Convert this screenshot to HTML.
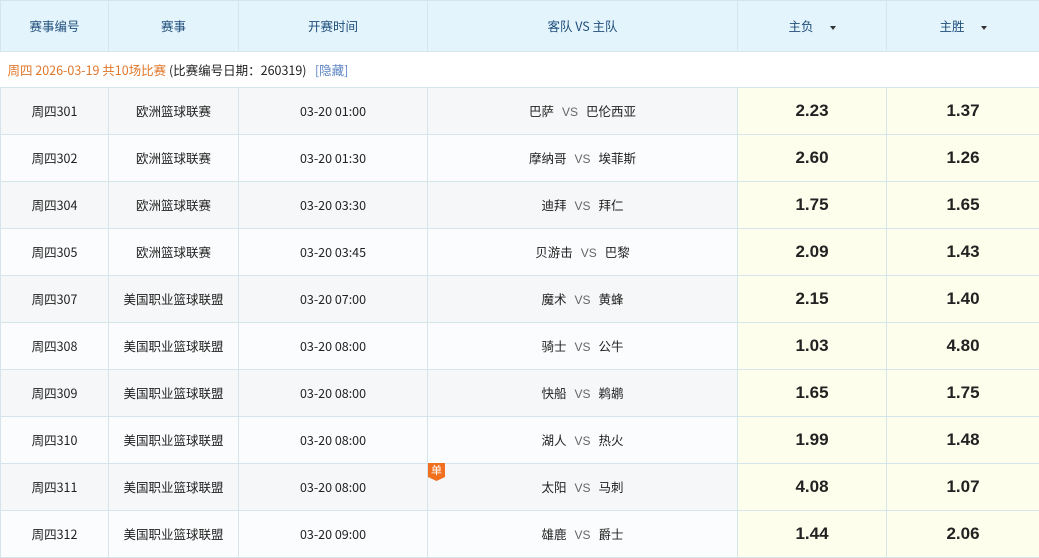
<!DOCTYPE html>
<html><head><meta charset="utf-8"><style>
*{margin:0;padding:0;box-sizing:border-box}
body{width:1039px;height:557px;overflow:hidden;background:#fff;font-family:"Noto Sans CJK SC","Liberation Sans",sans-serif;font-size:12.5px;color:#222}
table{border-collapse:collapse;table-layout:fixed;width:1039px}
td,th{border:1px solid #d5e5ec;text-align:center;font-weight:normal;vertical-align:middle;line-height:16px}
th{background:#e4f4fd;color:#1f4e79;height:51px;font-size:12.5px}
tr.r td{height:47px}
tr.r:nth-child(odd) td{background:#f6f7f8}
tr.r:nth-child(even) td{background:#fbfcfd}
tr.r td.o{background:#fefeed!important;font-weight:bold;font-size:17px;color:#222;font-family:"Liberation Sans",sans-serif}
.info td{height:36px;text-align:left;padding-left:7px;background:#fff;border-left:none;border-right:none}
.orange{color:#e0762a}
.blue{color:#5b83c4}
.vs{color:#666;font-size:12px;margin:0 8px;font-family:"Liberation Sans",sans-serif}
.arr{display:inline-block;width:0;height:0;border-left:3px solid transparent;border-right:3px solid transparent;border-top:4px solid #333;margin-left:16px;vertical-align:middle}
.badge{position:absolute;left:428px;top:463px;width:17px;height:18px;background:#f07020;color:#fff;font-size:11px;line-height:14px;text-align:center;clip-path:polygon(0 0,100% 0,100% 78%,50% 100%,0 78%)}
</style></head><body>
<table>
<colgroup><col style="width:108px"><col style="width:130px"><col style="width:189px"><col style="width:310px"><col style="width:149px"><col style="width:153px"></colgroup>
<tr><th>赛事编号</th><th>赛事</th><th>开赛时间</th><th>客队 VS 主队</th><th>主负<span class="arr"></span></th><th>主胜<span class="arr"></span></th></tr>
<tr class="info"><td colspan="6"><span class="orange">周四 2026-03-19 共10场比赛</span> (比赛编号日期：260319) &nbsp;&nbsp;<span class="blue">[隐藏]</span></td></tr>
<tr class="r"><td>周四301</td><td>欧洲篮球联赛</td><td>03-20 01:00</td><td>巴萨<span class="vs">VS</span>巴伦西亚</td><td class="o">2.23</td><td class="o">1.37</td></tr>
<tr class="r"><td>周四302</td><td>欧洲篮球联赛</td><td>03-20 01:30</td><td>摩纳哥<span class="vs">VS</span>埃菲斯</td><td class="o">2.60</td><td class="o">1.26</td></tr>
<tr class="r"><td>周四304</td><td>欧洲篮球联赛</td><td>03-20 03:30</td><td>迪拜<span class="vs">VS</span>拜仁</td><td class="o">1.75</td><td class="o">1.65</td></tr>
<tr class="r"><td>周四305</td><td>欧洲篮球联赛</td><td>03-20 03:45</td><td>贝游击<span class="vs">VS</span>巴黎</td><td class="o">2.09</td><td class="o">1.43</td></tr>
<tr class="r"><td>周四307</td><td>美国职业篮球联盟</td><td>03-20 07:00</td><td>魔术<span class="vs">VS</span>黄蜂</td><td class="o">2.15</td><td class="o">1.40</td></tr>
<tr class="r"><td>周四308</td><td>美国职业篮球联盟</td><td>03-20 08:00</td><td>骑士<span class="vs">VS</span>公牛</td><td class="o">1.03</td><td class="o">4.80</td></tr>
<tr class="r"><td>周四309</td><td>美国职业篮球联盟</td><td>03-20 08:00</td><td>快船<span class="vs">VS</span>鹈鹕</td><td class="o">1.65</td><td class="o">1.75</td></tr>
<tr class="r"><td>周四310</td><td>美国职业篮球联盟</td><td>03-20 08:00</td><td>湖人<span class="vs">VS</span>热火</td><td class="o">1.99</td><td class="o">1.48</td></tr>
<tr class="r"><td>周四311</td><td>美国职业篮球联盟</td><td>03-20 08:00</td><td>太阳<span class="vs">VS</span>马刺</td><td class="o">4.08</td><td class="o">1.07</td></tr>
<tr class="r"><td>周四312</td><td>美国职业篮球联盟</td><td>03-20 09:00</td><td>雄鹿<span class="vs">VS</span>爵士</td><td class="o">1.44</td><td class="o">2.06</td></tr>
</table>
<div class="badge">单</div>
</body></html>
